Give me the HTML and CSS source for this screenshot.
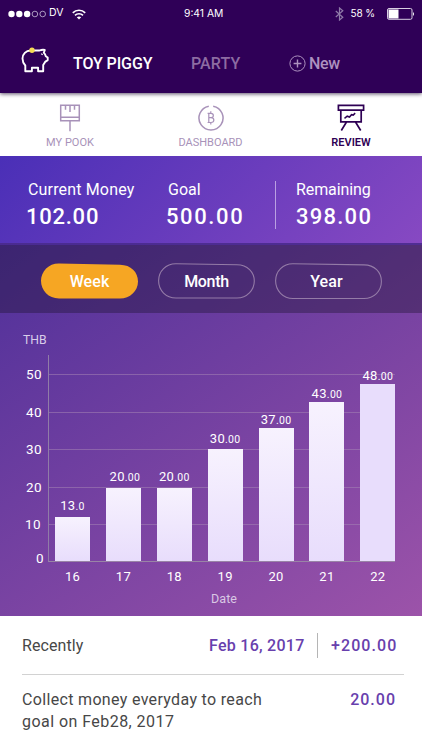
FILE: index.html
```html
<!DOCTYPE html>
<html lang="en">
<head>
<meta charset="utf-8">
<meta name="viewport" content="width=device-width, initial-scale=1">
<title>Toy Piggy</title>
<link rel="stylesheet" href="styles.css">
</head>
<body>
<header class="header">
  <div class="status">
    <div class="carrier">
      <svg width="38" height="8" viewBox="0 0 38 8"><g fill="#fff"><circle cx="3.5" cy="4" r="3.2"/><circle cx="11.3" cy="4" r="3.2"/><circle cx="19.1" cy="4" r="3.2"/></g><g fill="none" stroke="#c9bfd8" stroke-width=".8"><circle cx="26.9" cy="4" r="2.8"/><circle cx="34.7" cy="4" r="2.8"/></g></svg>
      <span>DV</span>
      <svg class="wifi" width="14" height="11" viewBox="0 0 14 11"><g fill="none" stroke="#fff" stroke-width="1.7"><path d="M.8 3.8C4.2.4 9.8.4 13.2 3.8"/><path d="M3 6.3c2.2-2.1 5.8-2.1 8 0"/></g><path d="M4.8 8.2c1.3-1.1 3.1-1.1 4.4 0L7 10.6z" fill="#fff"/></svg>
    </div>
    <span class="clock">9:41 AM</span>
    <div class="power">
      <svg width="9" height="14" viewBox="0 0 9 14"><path d="M.8 4l7 6.2L4.5 13V1l3.3 2.8-7 6.2" fill="none" stroke="#8f7aa8" stroke-width="1.2"/></svg>
      <span>58 %</span>
      <svg class="battery" width="28" height="12" viewBox="0 0 28 12"><rect x=".5" y=".5" width="24.5" height="10.8" rx="1.5" fill="none" stroke="#d8cfe2"/><path d="M1.5 1.5h10v9h-10z" fill="#fff"/><path d="M26 4q2 2 0 4z" fill="#fff"/></svg>
    </div>
  </div>
  <nav class="tabs">
    <svg class="pig" width="28" height="26" viewBox="0 0 28 26"><path d="M4.300 24.300V18.500C2.400 16.500 1.500 14 1.500 11.500 1.500 7 5 3.600 9.500 3.500h9c1.800-.8 3.400-1 5.300-.6l-1 2.800c1 1.100 1.700 2.200 2 3.500l1.900 1.300v2.600l-2.600 1.800-1.900 3.200v6.200h-5.100v-3.600h-6.200v3.600z" fill="none" stroke="#fff" stroke-width="1.900" stroke-linejoin="round"/><path d="M20.300 6.600l1.300 1.300" stroke="#fff" stroke-width="1.300"/><circle cx="11" cy="3.300" r="2.700" fill="#f6dc55"/></svg>
    <a class="tab tab-toy">TOY PIGGY</a>
    <a class="tab tab-party">PARTY</a>
    <svg class="plus" width="17" height="17" viewBox="0 0 17 17"><g fill="none" stroke="#ad91bf"><circle cx="8.500" cy="8.500" r="7.600" stroke-width="1"/><path d="M8.500 4.600v7.800M4.600 8.500h7.800" stroke-width="1.400"/></g></svg>
    <a class="tab tab-new">New</a>
  </nav>
</header>

<nav class="sections">
  <a class="section">
    <svg width="22" height="28" viewBox="0 0 22 28"><path d="M1.700 1.200h18.600v15.600H1.700zM1.700 13.300h18.600M11 17v10.200M6.500 1.500v4.300M11 1.500V8M15.500 1.500v4.300" fill="none" stroke="#a892b9" stroke-width="1.500"/></svg>
    <span class="label-pook">MY POOK</span>
  </a>
  <a class="section dash">
    <svg width="28" height="28" viewBox="0 0 28 28"><g fill="none" stroke="#a892b9" stroke-width="1.500"><path d="M11.800 2.200A12 12 0 1 0 16.200 2.200"/><path d="M11.800 9.300v9.200M10.600 9.300h3.400c3.100 0 3.100 4.300 0 4.300h-2.200M14 13.600c3.800 0 3.800 4.900 0 4.900h-3.400M13.800 7.200v2M13.800 18.600v2" stroke-width="1.200"/></g></svg>
    <span class="label-dash">DASHBOARD</span>
  </a>
  <a class="section active">
    <svg width="28" height="28" viewBox="0 0 28 28"><path d="M1.400 1.400h25.200v4.800H1.400zM3.800 6.500v11.300h20.400V6.500M9.500 18l-5.200 8.500M18.500 18l5.200 8.500" fill="none" stroke="#2e0054" stroke-width="1.700"/><path d="M7.500 14.300l2.700-2.100 2.300.8 2-2.300 1.700.4 2-2" fill="none" stroke="#2e0054" stroke-width="1.500"/></svg>
    <span class="label-review">REVIEW</span>
  </a>
</nav>

<section class="stats">
  <div class="stat stat-current"><span class="stat-name">Current Money</span><span class="stat-value">102.00</span></div>
  <div class="stat stat-goal"><span class="stat-name">Goal</span><span class="stat-value">500.00</span></div>
  <div class="stat stat-left"><span class="stat-name">Remaining</span><span class="stat-value">398.00</span></div>
</section>

<main class="report">
  <div class="periods">
    <button class="period week"><svg width="97" height="36" viewBox="0 0 97 36"><path d="M18 .4L79 1.700C90 1.900 97 9 97 18.500S89 35.500 79 35.500H18C7.500 35.500 0 27.500 0 17.800S8 .2 18 .4z" fill="#f6a623"/></svg><span>Week</span></button>
    <button class="period month"><svg width="97" height="36" viewBox="0 0 97 36"><path d="M18 .7L79 1.700C89.500 1.900 96.300 9 96.300 18S89 35 79 35H18C8 35 .6 27.500 .6 17.800S8 .6 18 .7z"/></svg><span>Month</span></button>
    <button class="period year"><svg width="107" height="36" viewBox="0 0 107 36"><path d="M18 .7L89 1.900C99.500 2.100 106.400 9 106.400 18.500S99 35.500 89 35.500H18C8 35.500 .6 27.500 .6 17.800S8 .6 18 .7z"/></svg><span>Year</span></button>
  </div>
  <div class="chart">
    <div class="unit">THB</div>
    <div class="scale"><span>50</span><span>40</span><span>30</span><span>20</span><span class="ten">10</span><span class="zero">0</span></div>
    <div class="plot">
      <div class="col"><span class="amount">13<small>.0</small></span><i class="bar" style="height:44px"></i></div>
      <div class="col"><span class="amount shifted">20<small>.00</small></span><i class="bar" style="height:73.500px"></i></div>
      <div class="col"><span class="amount">20<small>.00</small></span><i class="bar" style="height:73.500px"></i></div>
      <div class="col near"><span class="amount">30<small>.00</small></span><i class="bar" style="height:112px"></i></div>
      <div class="col close"><span class="amount">37<small>.00</small></span><i class="bar" style="height:133.500px"></i></div>
      <div class="col close"><span class="amount">43<small>.00</small></span><i class="bar" style="height:159px"></i></div>
      <div class="col close last"><span class="amount">48<small>.00</small></span><i class="bar" style="height:177px"></i></div>
    </div>
    <div class="days"><span>16</span><span>17</span><span>18</span><span>19</span><span>20</span><span>21</span><span>22</span></div>
    <div class="axis-name">Date</div>
  </div>
</main>

<section class="history">
  <div class="row recent">
    <span class="recent-name">Recently</span>
    <span class="date">Feb 16, 2017</span>
    <span class="delta">+200.00</span>
  </div>
  <div class="row note">
    <p><span class="line-one">Collect money everyday to reach</span><br><span class="line-two">goal on Feb28, 2017</span></p>
    <span class="sum">20.00</span>
  </div>
</section>
</body>
</html>
```

FILE: styles.css
```css
* { box-sizing: border-box; }

body {
  margin: 0;
  width: 422px;
  height: 750px;
  overflow: hidden;
  background: #fff;
  font-family: Roboto, "Noto Sans", sans-serif;
  color: #fff;
}

svg { display: block; flex: none; }
span, a { white-space: nowrap; }

.header {
  position: relative;
  z-index: 1;
  height: 93px;
  background: #2f0057;
  box-shadow: 0 1px 4px rgba(20, 0, 40, .7);
}

.status {
  display: grid;
  grid-template-columns: 176px 1fr auto;
  align-items: center;
  height: 28px;
  padding: 0 7px 0 8px;
  font: 11px/14px Inter, sans-serif;
}
.carrier, .power { display: flex; align-items: center; }
.carrier span { margin: -3px 9px 0 3px; font-size: 10.500px; }
.clock { margin-top: -3px; font-size: 10.300px; }
.power span { margin: -3px 12px 0 7px; font-size: 10px; letter-spacing: -.1px; }

.tabs { display: flex; align-items: center; height: 65px; padding: 0 0 0 21px; }
.pig { margin-top: -2px; }
.tab { font-size: 16px; line-height: 20px; font-weight: 500; margin-top: 7px; }
.tab-toy { width: 118px; margin-left: 24px; letter-spacing: -.1px; }
.tab-party { width: 98px; color: #8d6ca2; letter-spacing: .1px; }
.plus { margin-top: 6px; }
.tab-new { margin-left: 3px; color: #ad91bf; letter-spacing: -.3px; }

.sections { display: grid; grid-template-columns: 140px 140px 142px; height: 63px; padding-top: 11px; }
.section { display: flex; flex-direction: column; align-items: center; color: #a892b9; font-size: 11px; line-height: 14px; }
.dash { padding-left: 1px; }
.section span { margin-top: 4px; }
.active { color: #2e0054; font-weight: 600; }

.stats {
  display: flex;
  height: 87px;
  padding: 24px 0 0 27px;
  background: linear-gradient(135deg, #4a2fb7, #8749c2);
}
.stat { display: flex; flex-direction: column; }
.stat-current { width: 140px; }
.stat-goal { width: 109px; border-right: 1px solid #baa0e2; height: 48px; margin-top: 1px; }
.stat-goal .stat-name { margin-top: -1px; }
.stat-left { padding-left: 20px; }
.stat-name { font-size: 16px; line-height: 20px; }
.stat-current .stat-name { padding-left: 1px; letter-spacing: .16px; }
.stat-goal .stat-name { padding-left: 1px; }
.stat-left .stat-name { letter-spacing: -.1px; }
.stat-value { font-size: 22px; line-height: 26px; margin-top: 4px; font-weight: 500; letter-spacing: 1.250px; }
.stat-current .stat-value { margin-left: -1px; letter-spacing: .750px; }
.stat-goal .stat-value { margin-left: -1px; letter-spacing: 1.600px; }

.report { height: 373px; background: linear-gradient(145deg, #4f309a, #9c53a9); }
.periods {
  display: flex;
  align-items: flex-start;
  height: 70px;
  padding: 17.500px 0 0 41px;
  border-top: 2px solid rgba(80, 45, 160, .7);
  background: rgba(28, 18, 48, .38);
}
.period {
  position: relative;
  width: 97px;
  height: 36px;
  padding: 0;
  border: 0;
  background: none;
  color: #fff;
  font: 500 16px/36px Roboto, sans-serif;
  letter-spacing: .1px;
}
.period svg { position: absolute; inset: 0; overflow: visible; }
.period span { position: relative; top: 1px; }
.month { letter-spacing: -.3px; }
.month, .year { margin-left: 20px; }
.month path, .year path { fill: none; stroke: #947ba7; stroke-width: 1.100; }
.year { width: 107px; padding-right: 4px; }

.chart {
  display: grid;
  grid-template-columns: 48px 348px;
  grid-template-rows: 42px 207px 28px 20px;
}
.unit { grid-column: 1 / 3; padding: 19px 0 0 23px; font-size: 12.200px; line-height: 16px; color: #d9cdea; }
.scale { display: flex; flex-direction: column; padding: 10px 6px 0 0; text-align: right; font-size: 13.500px; letter-spacing: .4px; }
.scale span { flex: none; height: 37.600px; line-height: 18px; }
.scale .ten { padding-right: 1px; }
.scale .zero { height: 18px; margin-top: -4px; margin-right: -2px; }
.plot {
  display: grid;
  grid-template-columns: repeat(7, 50.900px);
  width: 347px;
  border-left: 1px solid #907ca7;
  border-bottom: 1px solid #9984a6;
  background: repeating-linear-gradient(#a482b48c 0 1px, transparent 1px 37.600px) 0 19px / 100% 152px no-repeat;
}
.col { display: flex; flex-direction: column; align-items: center; justify-content: flex-end; width: 47px; }
.bar { width: 35px; background: linear-gradient(#f7f2fe, #e8ddfc); }
.last .bar { background: #e8ddfc; }
.amount { font-size: 13px; line-height: 16px; letter-spacing: .3px; margin-bottom: 2px; }
.amount small { font-size: 10.500px; }
.shifted { padding-left: 3px; }
.near .amount { margin-bottom: 1px; }
.close .amount { margin-bottom: -1px; }
.days { grid-column: 2; display: grid; grid-template-columns: repeat(7, 50.900px); padding-top: 7px; font-size: 13px; line-height: 16px; letter-spacing: .3px; }
.days span { width: 49px; text-align: center; }
.axis-name { grid-column: 2; padding: 1px 0 0 4px; text-align: center; font-size: 12.500px; line-height: 16px; letter-spacing: .1px; color: #d9c7e4; }

.history { padding: 0 18px 0 22px; font-size: 16px; color: #474747; }
.row { display: flex; }
.recent { height: 59px; padding-top: 1px; border-bottom: 1px solid #d2d2d2; align-items: center; }
.recent-name { width: 187px; letter-spacing: .1px; }
.date, .delta, .sum { color: #6840ad; font-weight: 500; }
.date { width: 109px; line-height: 25px; border-right: 1px solid #b5b5b5; letter-spacing: .270px; }
.delta { margin-left: 13px; letter-spacing: 1.100px; }
.note { justify-content: space-between; padding: 14px 8px 0 0; line-height: 22px; }
.note p { margin: 0; }
.line-one { letter-spacing: .330px; }
.line-two { letter-spacing: .450px; }
.sum { letter-spacing: 1px; }
```
